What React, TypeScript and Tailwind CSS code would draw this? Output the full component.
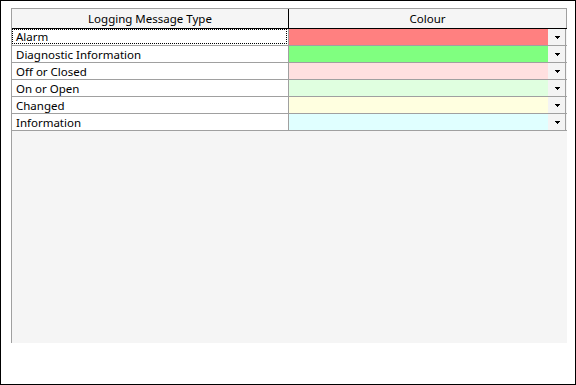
import React from "react";

const rows = [
  { label: "Alarm", color: "bg-[#ff8080]", focus: true },
  { label: "Diagnostic Information", color: "bg-[#80ff80]" },
  { label: "Off or Closed", color: "bg-[#ffe0e0]" },
  { label: "On or Open", color: "bg-[#e0ffe0]" },
  { label: "Changed", color: "bg-[#ffffe0]" },
  { label: "Information", color: "bg-[#e0ffff]" },
];

function Arrow() {
  return (
    <svg width="5" height="3" viewBox="0 0 5 3" className="block">
      <path d="M0 0H5L2.5 3Z" fill="#000" shapeRendering="crispEdges" />
    </svg>
  );
}

export default function App() {
  return (
    <div className="w-[576px] h-[385px] bg-white font-['Segoe_UI','Noto_Sans',sans-serif] text-[11.5px] text-black">
      <div className="w-[576px] h-[385px] border border-black pl-[10px] pt-[7px]">
        <div className="w-[556px] h-[335px] bg-[#f5f5f5] border-l border-t border-[#a0a0a0] flex flex-col">
          <div className="h-[20px] flex border-b border-black">
            <div className="w-[277px] border-r border-black flex items-center justify-center leading-none pt-[1px]">
              Logging Message Type
            </div>
            <div className="flex-1 border-r border-[#a0a0a0] flex items-center justify-center leading-none pt-[1px]">
              Colour
            </div>
          </div>
          {rows.map((r) => (
            <div key={r.label} className="h-[17px] flex border-b border-[#a0a0a0]">
              <div className="w-[277px] bg-white border-r border-[#a0a0a0] flex">
                {r.focus ? (
                  <div className="w-[275px] h-[15px] border border-dotted border-black flex items-center pl-[3px] pt-[1px] leading-none">
                    {r.label}
                  </div>
                ) : (
                  <div className="flex items-center pl-[4px] pt-[1px] leading-none">{r.label}</div>
                )}
              </div>
              <div className={`w-[259px] ${r.color}`} />
              <div className="w-[18px] bg-[#f4f4f4] border-r border-[#a0a0a0] flex items-center justify-center pl-[1px] pt-[1px]">
                <Arrow />
              </div>
            </div>
          ))}
        </div>
      </div>
    </div>
  );
}
